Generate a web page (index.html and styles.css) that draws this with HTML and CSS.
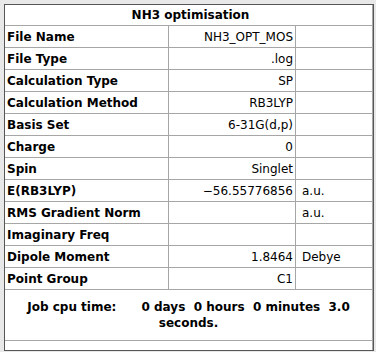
FILE: index.html
```html
<!DOCTYPE html>
<html>
<head>
<meta charset="utf-8">
<link rel="stylesheet" href="styles.css">
</head>
<body>
<div class="frame">
  <div class="grid">
    <div class="cell title">NH3 optimisation</div>

    <div class="cell label">File Name</div><div class="cell value">NH3_OPT_MOS</div><div class="cell unit"></div>
    <div class="cell label">File Type</div><div class="cell value">.log</div><div class="cell unit"></div>
    <div class="cell label">Calculation Type</div><div class="cell value">SP</div><div class="cell unit"></div>
    <div class="cell label">Calculation Method</div><div class="cell value">RB3LYP</div><div class="cell unit"></div>
    <div class="cell label">Basis Set</div><div class="cell value">6-31G(d,p)</div><div class="cell unit"></div>
    <div class="cell label">Charge</div><div class="cell value">0</div><div class="cell unit"></div>
    <div class="cell label">Spin</div><div class="cell value">Singlet</div><div class="cell unit"></div>
    <div class="cell label">E(RB3LYP)</div><div class="cell value">−56.55776856</div><div class="cell unit">a.u.</div>
    <div class="cell label">RMS Gradient Norm</div><div class="cell value"></div><div class="cell unit">a.u.</div>
    <div class="cell label">Imaginary Freq</div><div class="cell value"></div><div class="cell unit"></div>
    <div class="cell label">Dipole Moment</div><div class="cell value">1.8464</div><div class="cell unit">Debye</div>
    <div class="cell label">Point Group</div><div class="cell value">C1</div><div class="cell unit"></div>

    <div class="cell job"><p class="jobtext">Job cpu time:      0 days  0 hours  0 minutes  3.0 seconds.</p></div>
    <div class="cell tail"></div>
  </div>
</div>
</body>
</html>
```

FILE: styles.css
```css
* { box-sizing: border-box; }
html, body {
  margin: 0;
  padding: 0;
  background: #e8e8e8;
}
body {
  padding: 4px 0 0 4px;
  font-family: "DejaVu Sans", "Liberation Sans", sans-serif;
  font-size: 12px;
  color: #000;
}
.frame {
  width: 370px;
  height: 347px;
  border: 1px solid #565656;
  background: #fff;
}
.grid {
  display: grid;
  grid-template-columns: 164px 127px 77px;
  grid-template-rows: 21px repeat(12, 22px) 51px 9px;
}
.cell {
  border-right: 1px solid #a6a6a6;
  border-bottom: 1px solid #a6a6a6;
  display: flex;
  align-items: center;
  white-space: nowrap;
  overflow: hidden;
}
.title {
  grid-column: 1 / 4;
  justify-content: center;
  font-weight: bold;
  padding-left: 4px;
}
.label {
  font-weight: bold;
  padding-left: 2px;
}
.value {
  justify-content: flex-end;
  padding-right: 2px;
}
.unit {
  padding-left: 6px;
}
.job {
  grid-column: 1 / 4;
  justify-content: center;
  white-space: normal;
}
.jobtext {
  margin: 0;
  width: 100%;
  padding: 0 4px;
  text-align: center;
  font-weight: bold;
  line-height: 16px;
  white-space: pre-wrap;
}
.tail {
  grid-column: 1 / 4;
  border-bottom: none;
}
```
